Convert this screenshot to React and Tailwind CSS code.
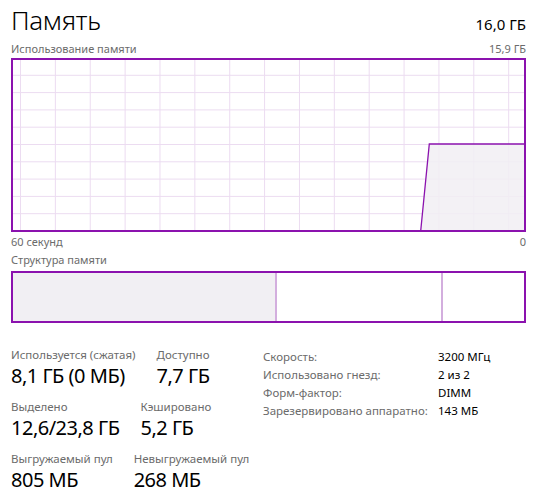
const PURPLE = "#8b12ae";
const GRID = "#ecdcf1";

const vLines = Array.from({ length: 15 }, (_, i) => 9.5 + i * 34.87);
const hLines = Array.from({ length: 9 }, (_, i) => (i + 1) * 17.3);

const UsageGraph = () => (
  <svg width="515" height="174" className="block">
    {vLines.map((x) => (
      <line key={x} x1={x} y1="0" x2={x} y2="174" stroke={GRID} strokeWidth="1" />
    ))}
    {hLines.map((y) => (
      <line key={y} x1="0" y1={y} x2="515" y2={y} stroke={GRID} strokeWidth="1" />
    ))}
    <polygon points="409.7,173 418.3,86 515,86 515,173" fill="#f1eff3" fillOpacity="0.85" />
    <polyline points="409.7,173 418.3,86 515,86" fill="none" stroke={PURPLE} strokeWidth="1.3" />
    <rect x="1" y="1" width="513" height="172" fill="none" stroke={PURPLE} strokeWidth="2" />
  </svg>
);

const Stat = ({ label, value }) => (
  <div className="flex flex-col">
    <span className="text-[11.5px] leading-[15px] text-[#6b6b6b]">{label}</span>
    <span className="text-[20px] leading-[26px] tracking-[-0.5px] text-black mt-[1px]">{value}</span>
  </div>
);

const details = [
  ["Скорость:", "3200 МГц"],
  ["Использовано гнезд:", "2 из 2"],
  ["Форм-фактор:", "DIMM"],
  ["Зарезервировано аппаратно:", "143 МБ"],
];

export default function App() {
  return (
    <div
      className="w-[536px] h-[500px] bg-white overflow-hidden pl-[11px] pr-[11px]"
      style={{ fontFamily: '"Segoe UI", "Noto Sans", "Open Sans", sans-serif' }}
    >
      <div className="flex justify-between items-end pt-[2px] w-[515px]">
        <span className="text-[26px] leading-[36px] font-light text-black tracking-[-0.3px]">Память</span>
        <span className="text-[15px] leading-[20px] text-black mb-[4px]">16,0 ГБ</span>
      </div>
      <div className="flex justify-between w-[515px] mt-[3px] text-[11px] leading-[15px] text-[#6b6b6b]">
        <span>Использование памяти</span>
        <span>15,9 ГБ</span>
      </div>
      <div className="mt-[2px]">
        <UsageGraph />
      </div>
      <div className="flex justify-between w-[515px] mt-[2px] text-[11px] leading-[15px] text-[#6b6b6b]">
        <span>60 секунд</span>
        <span>0</span>
      </div>
      <div className="mt-[3px] text-[11px] leading-[15px] text-[#6b6b6b]">Структура памяти</div>
      <div className="mt-[4px] w-[515px] h-[52px] border-2 border-[#8b12ae] flex">
        <div className="w-[264px] bg-[#f1eff3] border-r-2 border-[#d3aede]" />
        <div className="w-[166px] border-r-2 border-[#d3aede]" />
        <div className="flex-1" />
      </div>
      <div className="flex items-start mt-[24px]">
        <div className="w-[252px] flex flex-col gap-[10px]">
          <div className="flex gap-[21px]">
            <Stat label="Используется (сжатая)" value="8,1 ГБ (0 МБ)" />
            <Stat label="Доступно" value="7,7 ГБ" />
          </div>
          <div className="flex gap-[21px]">
            <Stat label="Выделено" value="12,6/23,8 ГБ" />
            <Stat label="Кэшировано" value="5,2 ГБ" />
          </div>
          <div className="flex gap-[21px]">
            <Stat label="Выгружаемый пул" value="805 МБ" />
            <Stat label="Невыгружаемый пул" value="268 МБ" />
          </div>
        </div>
        <div className="grid grid-cols-[175px_auto] content-start text-[11.5px] leading-[18px] pt-[1px]">
          {details.map(([k, v]) => (
            <div key={k} className="contents">
              <span className="text-[#6b6b6b]">{k}</span>
              <span className="text-black">{v}</span>
            </div>
          ))}
        </div>
      </div>
    </div>
  );
}
